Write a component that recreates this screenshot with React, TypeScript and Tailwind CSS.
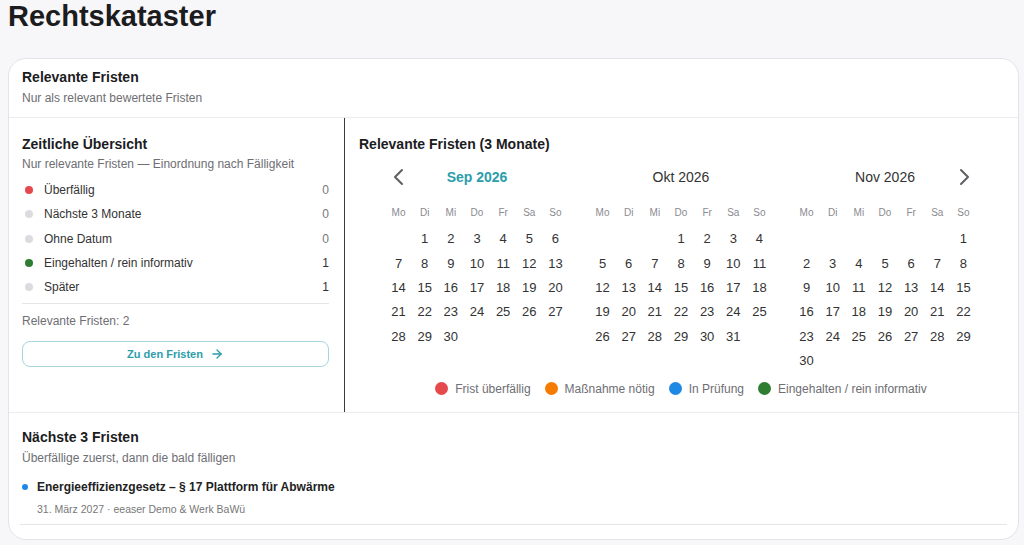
import { ArrowRight } from 'lucide-react';

const font = { fontFamily: '"Liberation Sans", Arial, sans-serif' };

const weekdays = ['Mo', 'Di', 'Mi', 'Do', 'Fr', 'Sa', 'So'];

type Month = { label: string; offset: number; days: number; active?: boolean };

const months: Month[] = [
    { label: 'Sep 2026', offset: 1, days: 30, active: true },
    { label: 'Okt 2026', offset: 3, days: 31 },
    { label: 'Nov 2026', offset: 6, days: 30 },
];

const statusRows = [
    { label: 'Überfällig', dot: 'bg-[#e5484d]', count: 0 },
    { label: 'Nächste 3 Monate', dot: 'bg-[#dcdce0]', count: 0 },
    { label: 'Ohne Datum', dot: 'bg-[#dcdce0]', count: 0 },
    { label: 'Eingehalten / rein informativ', dot: 'bg-[#2e7d32]', count: 1 },
    { label: 'Später', dot: 'bg-[#dcdce0]', count: 1 },
];

const legend = [
    { label: 'Frist überfällig', dot: 'bg-[#e5484d]' },
    { label: 'Maßnahme nötig', dot: 'bg-[#f57c00]' },
    { label: 'In Prüfung', dot: 'bg-[#1e88e5]' },
    { label: 'Eingehalten / rein informativ', dot: 'bg-[#2e7d32]' },
];

function Chevron({ dir }: { dir: 'left' | 'right' }) {
    return (
        <svg width="12" height="18" viewBox="0 0 12 18" fill="none">
            <polyline
                points={dir === 'left' ? '9,2 2,9 9,16' : '3,2 10,9 3,16'}
                stroke="#5f5f64"
                strokeWidth="2"
                strokeLinecap="round"
                strokeLinejoin="round"
            />
        </svg>
    );
}

function MonthGrid({ month, index }: { month: Month; index: number }) {
    const cells: (number | null)[] = [];
    for (let i = 0; i < month.offset; i++) cells.push(null);
    for (let d = 1; d <= month.days; d++) cells.push(d);

    return (
        <div className="w-[183px]">
            {/* Month header with nav arrows on the outer months */}
            <div className="grid grid-cols-[26px_1fr_26px] items-center h-6">
                <div className="flex justify-center">
                    {index === 0 && <Chevron dir="left" />}
                </div>
                <div
                    className={`text-center text-[14px] ${month.active ? 'font-bold text-[#2b9dab]' : 'text-[#333]'}`}
                >
                    {month.label}
                </div>
                <div className="flex justify-center">
                    {index === 2 && <Chevron dir="right" />}
                </div>
            </div>
            {/* Weekdays */}
            <div className="grid grid-cols-7 mt-[11px] h-6 items-center">
                {weekdays.map(w => (
                    <div key={w} className="text-center text-[10px] text-[#8a8a8f]">{w}</div>
                ))}
            </div>
            {/* Days */}
            <div className="grid grid-cols-7 mt-[3px] auto-rows-[24.3px] items-center">
                {cells.map((d, i) => (
                    <div key={i} className="text-center text-[13px] text-[#333]">{d ?? ''}</div>
                ))}
            </div>
        </div>
    );
}

export default function App() {
    return (
        <div className="min-h-screen bg-[#f7f7fa] pl-2 pr-[5px]" style={font}>
            <h1 className="text-[29px] leading-[32px] font-bold text-[#1c1c1e]">Rechtskataster</h1>

            {/* Card */}
            <div className="mt-[26px] bg-white border border-[#e3e3e8] rounded-[18px] overflow-hidden">
                {/* Card header */}
                <div className="pt-[8px] pb-[11px] px-[13px] border-b border-[#ececf0]">
                    <div className="text-[14px] leading-5 font-bold text-[#1c1c1e]">Relevante Fristen</div>
                    <div className="mt-[3px] text-[12px] leading-4 text-[#6e6e73]">Nur als relevant bewertete Fristen</div>
                </div>

                {/* Middle: overview + calendar */}
                <div className="flex border-b border-[#ececf0]">
                    {/* Left column */}
                    <div className="w-[336px] shrink-0 border-r border-[#3a3a3a] pl-[13px] pr-[15px] pt-4 pb-[15px]">
                        <div className="text-[14px] leading-5 font-bold text-[#1c1c1e]">Zeitliche Übersicht</div>
                        <div className="mt-[2px] text-[12px] leading-4 text-[#6e6e73]">
                            Nur relevante Fristen — Einordnung nach Fälligkeit
                        </div>
                        <ul className="mt-[6px]">
                            {statusRows.map(row => (
                                <li key={row.label} className="h-[24.3px] flex items-center">
                                    <span className={`w-2 h-2 rounded-full ml-[3px] ${row.dot}`} />
                                    <span className="ml-[11px] text-[12px] text-[#333] flex-1">{row.label}</span>
                                    <span className={`text-[12px] ${row.count > 0 ? 'text-[#333]' : 'text-[#777]'}`}>
                                        {row.count}
                                    </span>
                                </li>
                            ))}
                        </ul>
                        <div className="mt-[4px] border-t border-[#e6e6ea]" />
                        <div className="mt-[9px] text-[12px] leading-4 text-[#6e6e73]">Relevante Fristen: 2</div>
                        <button className="mt-3 w-full h-[26px] rounded-lg border border-[#a6d6dc] flex items-center justify-center gap-[7px] text-[11px] font-bold text-[#2b9dab]">
                            Zu den Fristen
                            <ArrowRight size={14} strokeWidth={2.25} />
                        </button>
                    </div>

                    {/* Right column: calendar */}
                    <div className="flex-1 pl-[14px] pr-[15px] pt-4 pb-[15px]">
                        <div className="text-[14px] leading-5 font-bold text-[#1c1c1e]">Relevante Fristen (3 Monate)</div>
                        <div className="mt-[11px] flex justify-center items-start gap-x-[21px]">
                            {months.map((m, i) => (
                                <MonthGrid key={m.label} month={m} index={i} />
                            ))}
                        </div>
                        {/* Legend */}
                        <div className="mt-2 h-4 flex items-center justify-center gap-[14px]">
                            {legend.map(l => (
                                <div key={l.label} className="flex items-center gap-[7px]">
                                    <span className={`w-[13px] h-[13px] rounded-full ${l.dot}`} />
                                    <span className="text-[12px] text-[#6e6e73]">{l.label}</span>
                                </div>
                            ))}
                        </div>
                    </div>
                </div>

                {/* Next deadlines */}
                <div className="px-[13px] pt-[14px] pb-[14px]">
                    <div className="text-[14px] leading-5 font-bold text-[#1c1c1e]">Nächste 3 Fristen</div>
                    <div className="mt-[3px] text-[12px] leading-4 text-[#6e6e73]">Überfällige zuerst, dann die bald fälligen</div>
                    <div className="mt-[13px] -mx-[2px] px-[2px] pb-[7px] border-b border-[#e6e6ea]">
                        <div className="flex items-center h-4">
                            <span className="w-[6px] h-[6px] rounded-full bg-[#1e88e5]" />
                            <span className="ml-[9px] text-[12px] font-bold text-[#222]">
                                Energieeffizienzgesetz – § 17 Plattform für Abwärme
                            </span>
                        </div>
                        <div className="mt-[8px] ml-[15px] h-[14px] flex items-center text-[10.5px] text-[#777]">
                            31. März 2027 · eeaser Demo &amp; Werk BaWü
                        </div>
                    </div>
                </div>
            </div>
        </div>
    );
}
